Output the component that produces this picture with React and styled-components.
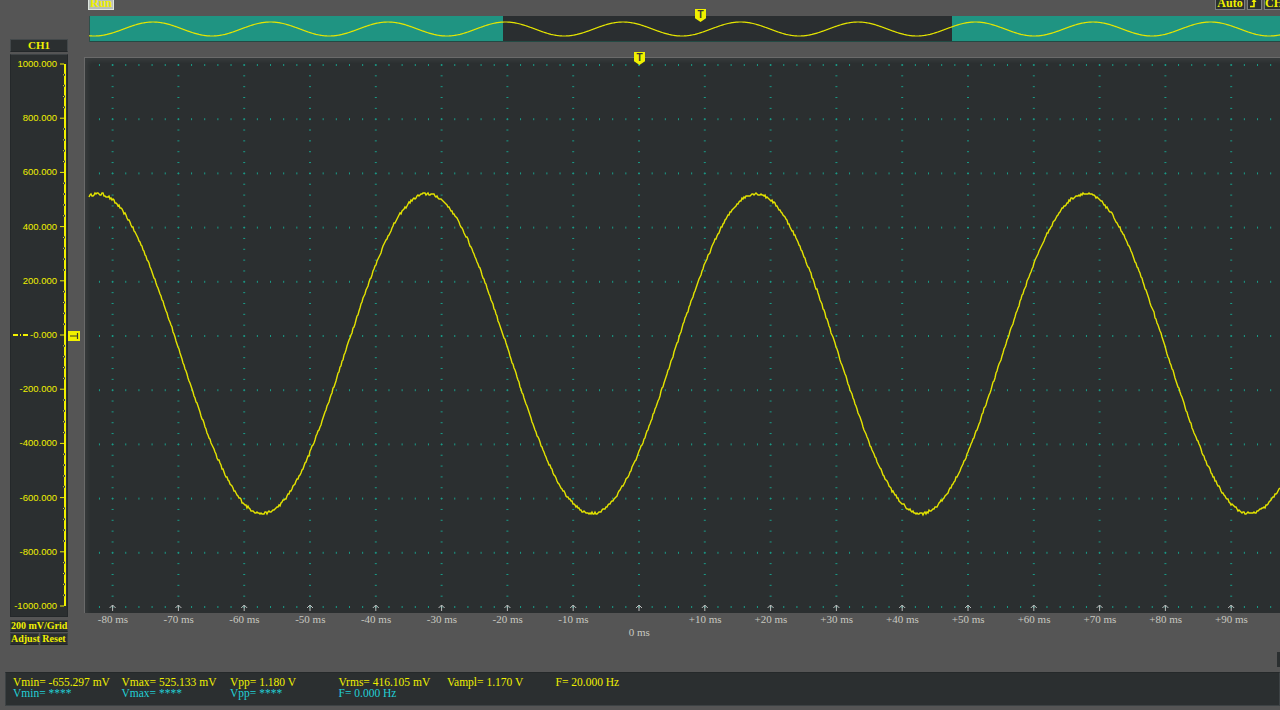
import React from 'react';
import styled, { createGlobalStyle } from 'styled-components';

const YELLOW = '#f0f000';
const DARK = '#2b2f30';
const GRAY = '#555555';
const TEAL = '#1f9482';
const GRID = '#1a9c88';

const Global = createGlobalStyle`
  html, body { margin: 0; padding: 0; background: ${GRAY}; overflow: hidden; }
  #root { width: 1280px; height: 710px; }
`;

const Screen = styled.div`
  width: 1280px;
  height: 710px;
  background: ${GRAY};
  display: flex;
  flex-direction: column;
  overflow: hidden;
  font-family: "Liberation Serif", serif;
`;

const Upper = styled.div`
  display: flex;
  height: 670px;
  flex: none;
`;

const LeftCol = styled.div`
  width: 80px;
  flex: none;
  box-sizing: border-box;
  padding: 39px 0 0 10px;
  display: flex;
  flex-direction: column;
`;

const ChHeader = styled.div`
  width: 58px;
  height: 13px;
  box-sizing: border-box;
  border: 1px solid #43484a;
  border-bottom-color: #232729;
  background: ${DARK};
  color: ${YELLOW};
  font: bold 11px/11px "Liberation Serif", serif;
  text-align: center;
`;

const AxisPanel = styled.div`
  position: relative;
  width: 58px;
  height: 563px;
  margin-top: 2px;
  box-sizing: border-box;
  border: 1px solid #24282a;
  border-top-color: #3e4345;
  background: ${DARK};
  display: flex;
`;

const AxisLabels = styled.div`
  width: 47px;
  box-sizing: border-box;
  padding: 3px 1px 4px 0;
  display: flex;
  flex-direction: column;
  justify-content: space-between;
  align-items: flex-end;
`;

const AxisLabel = styled.div`
  height: 12px;
  line-height: 12px;
  display: flex;
  align-items: center;
  gap: 1px;
  color: ${YELLOW};
  font-size: 9.5px;
  font-family: "Liberation Sans", Arial, sans-serif;
  white-space: nowrap;
`;

const ZeroDash = styled.span`
  width: 16px;
  height: 2px;
  background: repeating-linear-gradient(90deg, ${YELLOW} 0 5px, transparent 5px 7px, ${YELLOW} 7px 8px, transparent 8px 10px);
`;

const ZeroMarker = styled.div`
  position: absolute;
  left: 57px;
  top: 276px;
  width: 12px;
  height: 10px;
  background: ${YELLOW};
  display: flex;
  align-items: center;
  justify-content: center;
`;

const SmallBox = styled.div`
  height: 12px;
  box-sizing: border-box;
  border: 1px solid #3b4042;
  border-bottom-color: #222628;
  background: ${DARK};
  color: ${YELLOW};
  font: bold 10px/10px "Liberation Serif", serif;
  text-align: center;
  white-space: nowrap;
`;

const ScaleBox = styled(SmallBox)`
  width: 58px;
  margin-top: 3px;
`;

const ButtonRow = styled.div`
  width: 58px;
  margin-top: 1px;
  display: flex;
  gap: 1px;
`;

const SideButton = styled(SmallBox)`
  width: ${p => p.$w}px;
`;

const RightCol = styled.div`
  flex: 1;
  min-width: 0;
  display: flex;
  flex-direction: column;
`;

const TopBar = styled.div`
  height: 16px;
  flex: none;
  display: flex;
  align-items: flex-start;
`;

const TopButton = styled.div`
  flex: none;
  height: 15px;
  margin-top: -5px;
  box-sizing: border-box;
  display: flex;
  align-items: center;
  justify-content: center;
  color: ${YELLOW};
  font: bold 12px/12px "Liberation Serif", serif;
  width: ${p => p.$w}px;
  margin-left: ${p => p.$ml || 0}px;
  margin-right: ${p => p.$mr || 0}px;
  background: ${p => (p.$light ? '#b7bfb8' : DARK)};
  border: 1px solid ${p => (p.$light ? '#dfe5df' : '#7d7f80')};
  overflow: hidden;
  white-space: nowrap;
`;

const Spacer = styled.div`flex: 1;`;

const Overview = styled.div`
  position: relative;
  height: 26px;
  margin-left: 9px;
  flex: none;
`;

const TMarker = styled.div`
  position: absolute;
  left: ${p => p.$x}px;
  top: ${p => p.$y}px;
  width: 11px;
  height: 13px;
  background: ${YELLOW};
  clip-path: polygon(0 0, 100% 0, 100% 72%, 50% 100%, 0 72%);
  color: #3a3a30;
  font: bold 10px/11px "Liberation Sans", Arial, sans-serif;
  text-align: center;
`;

const Plot = styled.div`
  position: relative;
  height: 556px;
  margin: 15px 0 0 4px;
  flex: none;
  box-sizing: border-box;
  background: ${DARK};
  border-top: 1px solid #6a6a6a;
  border-left: 1px solid #6a6a6a;
  box-shadow: inset 3px 3px 4px rgba(255, 255, 255, 0.06);
`;

const TimeAxis = styled.div`
  display: flex;
  height: 32px;
  flex: none;
`;

const TimeCell = styled.div`
  flex: none;
  width: 65.8px;
  text-align: center;
  padding-top: ${p => (p.$low ? 13 : 0)}px;
  box-sizing: border-box;
  color: #c8c8c0;
  font-size: 11px;
  line-height: 12px;
  white-space: nowrap;
`;

const ScrollStub = styled.div`
  align-self: flex-end;
  width: 3px;
  height: 15px;
  margin-top: 7px;
  background: ${DARK};
`;

const StatusBar = styled.div`
  margin: 2px 0 0 5px;
  height: 34px;
  flex: none;
  box-sizing: border-box;
  background: ${DARK};
  border: 1px solid #3d4244;
  border-top-color: #25292a;
  padding: 4px 0 0 7px;
  display: grid;
  grid-template-columns: repeat(6, 108.5px);
  grid-auto-rows: 11px;
`;

const Stat = styled.div`
  color: ${p => (p.$cyan ? '#22cfd6' : YELLOW)};
  font-size: 11.5px;
  line-height: 11px;
  white-space: nowrap;
`;

/* ---------- data ---------- */

const axisValues = ['1000.000', '800.000', '600.000', '400.000', '200.000', '0', '-200.000', '-400.000', '-600.000', '-800.000', '-1000.000'];
const times = [];
for (let k = -80; k <= 90; k += 10) times.push(k);
const timeLabel = k => (k < 0 ? `${k} ms` : k > 0 ? `+${k} ms` : '0 ms');

const PW = 1196;
const PH = 556;
const X0 = 555;
const PXMS = 6.58;
const yOf = v => 8 + (1000 - v) * 0.271;

function makeRng(seed) {
  let s = seed;
  return () => {
    s = (s * 16807) % 2147483647;
    return s / 2147483647;
  };
}

const wavePoints = (() => {
  const rnd = makeRng(12345);
  const pts = [];
  for (let x = 5; x <= PW; x += 1) {
    let v = -65 + 590 * Math.cos((2 * Math.PI * (x - 14)) / 329);
    v += (rnd() - 0.5) * 9;
    const y = Math.round(yOf(v));
    pts.push(`${x},${y}`);
  }
  return pts.join(' ');
})();

const overviewPoints = (() => {
  const pts = [];
  for (let x = 0; x <= 1191; x += 1) {
    const y = 13 - 7 * Math.cos((2 * Math.PI * (x - 64)) / 117.5);
    pts.push(`${x},${y.toFixed(2)}`);
  }
  return pts.join(' ');
})();

const gridRects = (() => {
  const out = [];
  const majorX = times.map(k => X0 + PXMS * k);
  const majorY = [];
  for (let i = 0; i <= 10; i++) majorY.push(8 + i * 54.2);
  majorY.forEach((Y, i) => {
    for (let j = -60; j <= 60; j++) {
      const X = X0 + PXMS * 2 * j;
      if (X < 4 || X > PW) continue;
      out.push(<rect key={`h${i}_${j}`} x={X - 0.5} y={Y - 1} width={1} height={2} />);
    }
  });
  majorX.forEach((X, i) => {
    for (let j = 0; j <= 50; j++) {
      const Y = 8 + 10.84 * j;
      out.push(<rect key={`v${i}_${j}`} x={X - 1} y={Y - 0.5} width={2} height={1} />);
    }
  });
  return out;
})();

const arrows = times.map(k => {
  const X = X0 + PXMS * k;
  return `M${X - 3} ${551} L${X} ${548} L${X + 3} ${551} M${X} ${548} L${X} ${554}`;
}).join(' ');

const rulerTicks = (() => {
  const out = [];
  for (let i = 0; i <= 10; i++) {
    const Y = 9 + i * 54.2;
    out.push(<rect key={`m${i}`} x={2} y={Y - 0.5} width={4} height={1} fill={YELLOW} />);
    if (i < 10) {
      for (let j = 1; j < 5; j++) {
        const y = Y + j * 10.84;
        out.push(<rect key={`n${i}_${j}`} x={6} y={y - 1} width={1} height={2} fill="#1a2a70" />);
        out.push(<rect key={`y${i}_${j}`} x={5} y={y - 0.5} width={1} height={1} fill={YELLOW} />);
      }
    }
  }
  return out;
})();

/* ---------- components ---------- */

function Ruler() {
  return (
    <svg width="9" height="561" viewBox="0 0 9 561">
      <rect x="6" y="9" width="2" height="542" fill={YELLOW} />
      {rulerTicks}
    </svg>
  );
}

function RisingEdge() {
  return (
    <svg width="11" height="11" viewBox="0 0 11 11">
      <path d="M1 9.5 H5 V2 H10" fill="none" stroke={YELLOW} strokeWidth="1.6" />
      <path d="M2.5 5 L5 1.5 L7.5 5 Z" fill={YELLOW} />
    </svg>
  );
}

export default function App() {
  return (
    <Screen>
      <Global />
      <Upper>
        <LeftCol>
          <ChHeader>CH1</ChHeader>
          <AxisPanel>
            <AxisLabels>
              {axisValues.map(v =>
                v === '0' ? (
                  <AxisLabel key={v}>
                    <ZeroDash />
                    -0.000
                  </AxisLabel>
                ) : (
                  <AxisLabel key={v}>{v}</AxisLabel>
                )
              )}
            </AxisLabels>
            <Ruler />
            <ZeroMarker>
              <svg width="10" height="8" viewBox="0 0 10 8">
                <path d="M1 4 H8 M8.5 1 V7" stroke="#3a3a2a" strokeWidth="1.2" fill="none" />
              </svg>
            </ZeroMarker>
          </AxisPanel>
          <ScaleBox>200 mV/Grid</ScaleBox>
          <ButtonRow>
            <SideButton $w={29}>Adjust</SideButton>
            <SideButton $w={28}>Reset</SideButton>
          </ButtonRow>
        </LeftCol>

        <RightCol>
          <TopBar>
            <TopButton $light $w={26} $ml={8}>Run</TopButton>
            <Spacer />
            <TopButton $w={30}>Auto</TopButton>
            <TopButton $w={15} $ml={2}><RisingEdge /></TopButton>
            <TopButton $w={26} $ml={2} $mr={-10}>CH1</TopButton>
          </TopBar>

          <Overview>
            <svg width="1191" height="26" viewBox="0 0 1191 26" style={{ display: 'block' }}>
              <rect x="0" y="0" width="414" height="26" fill={TEAL} />
              <rect x="414" y="0" width="449" height="26" fill="#2a2e30" />
              <rect x="863" y="0" width="328" height="26" fill={TEAL} />
              <rect x="0" y="25" width="1191" height="1" fill="#234a44" />
              <rect x="0" y="0" width="1" height="26" fill="#2f4f4a" />
              <polyline points={overviewPoints} fill="none" stroke="#e6e600" strokeWidth="1.2" />
            </svg>
            <TMarker $x={606} $y={-7}>T</TMarker>
          </Overview>

          <Plot>
            <svg width={PW} height={PH - 1} viewBox={`0 0 ${PW} ${PH - 1}`} style={{ display: 'block', marginTop: -1, marginLeft: -1 }}>
              <g fill={GRID}>{gridRects}</g>
              <path d={arrows} stroke="#bdbdbd" strokeWidth="1" fill="none" />
              <polyline points={wavePoints} fill="none" stroke="#e4e400" strokeWidth="1.4" strokeLinejoin="miter" />
            </svg>
            <TMarker $x={549} $y={-6}>T</TMarker>
          </Plot>

          <TimeAxis>
            {times.map(k => (
              <TimeCell key={k} $low={k === 0}>{timeLabel(k)}</TimeCell>
            ))}
          </TimeAxis>
          <ScrollStub />
        </RightCol>
      </Upper>

      <StatusBar>
        <Stat>Vmin= -655.297 mV</Stat>
        <Stat>Vmax= 525.133 mV</Stat>
        <Stat>Vpp= 1.180 V</Stat>
        <Stat>Vrms= 416.105 mV</Stat>
        <Stat>Vampl= 1.170 V</Stat>
        <Stat>F= 20.000 Hz</Stat>
        <Stat $cyan>Vmin= ****</Stat>
        <Stat $cyan>Vmax= ****</Stat>
        <Stat $cyan>Vpp= ****</Stat>
        <Stat $cyan>F= 0.000 Hz</Stat>
      </StatusBar>
    </Screen>
  );
}
